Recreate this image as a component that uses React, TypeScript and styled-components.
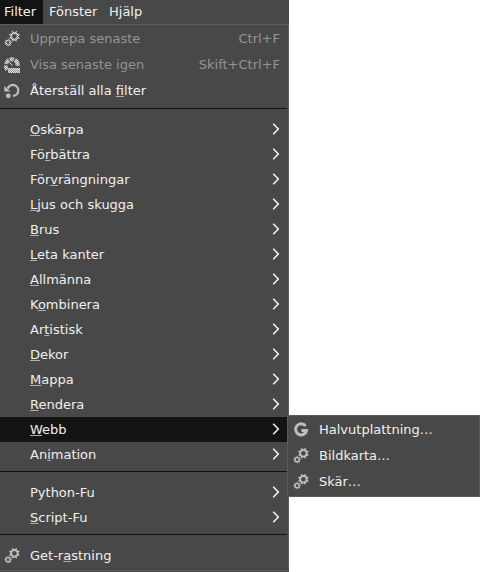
import React from 'react';
import styled, { createGlobalStyle } from 'styled-components';

const GlobalStyle = createGlobalStyle`
  body { margin: 0; background: #fff; overflow: hidden; }
  * { box-sizing: border-box; }
`;

const Screen = styled.div`
  display: flex;
  align-items: flex-start;
  width: 480px;
  height: 572px;
  overflow: hidden;
  font: 13px/16px "DejaVu Sans", sans-serif;
  color: #f0f0f0;
`;

const Column = styled.div`
  width: 289px;
  height: 572px;
  flex: none;
  background: #484848;
`;

const MenuBar = styled.nav`
  display: flex;
  height: 24px;
`;

const BarItem = styled.div<{ $active?: boolean; $width: number; $pad: number }>`
  width: ${p => p.$width}px;
  padding: 4px 0 0 ${p => p.$pad}px;
  white-space: nowrap;
  background: ${p => (p.$active ? '#131313' : 'transparent')};
`;

const Menu = styled.div`
  height: 547px;
  border: 1px solid #5a5a5a;
  border-left: 0;
  padding: 1px 0;
`;

const Submenu = styled.div`
  position: absolute;
  left: 287px;
  top: 415px;
  width: 193px;
  height: 82px;
  border: 1px solid #5a5a5a;
  background: #484848;
  padding: 1px 0;
`;

const Row = styled.div<{ $tall?: boolean; $active?: boolean; $disabled?: boolean; $inset?: number }>`
  display: flex;
  align-items: flex-start;
  height: ${p => (p.$tall ? 26 : 25)}px;
  padding: 5px 8px 0 ${p => p.$inset ?? 4}px;
  color: ${p => (p.$disabled ? '#949494' : '#f0f0f0')};
  background: ${p => (p.$active ? '#131313' : 'transparent')};
`;

const IconSlot = styled.span`
  flex: none;
  width: 26px;
  height: 16px;
  svg { display: block; overflow: visible; }
`;

const Label = styled.span`
  flex: 1;
  white-space: pre;
`;

const Key = styled.span`
  text-decoration: underline 1px #b0b0b0;
  text-underline-offset: 1px;
  text-decoration-skip-ink: none;
`;

const Chevron = styled.svg`
  display: block;
  flex: none;
  width: 8px;
  height: 12px;
  margin-top: 1px;
`;

const Separator = styled.div`
  height: 13px;
  margin-right: 1px;
  padding-top: 4px;
  &::before { content: ''; display: block; height: 1px; background: #131313; }
`;

function gearTeeth(cx: number, cy: number, inner: number, outer: number, turn: number) {
  return Array.from({ length: 8 }, (_, i) => {
    const a = turn + (i * Math.PI) / 4;
    return `M${cx + Math.cos(a) * inner} ${cy + Math.sin(a) * inner}L${cx + Math.cos(a) * outer} ${cy + Math.sin(a) * outer}`;
  }).join('');
}

type IconKind = 'gears' | 'gauge' | 'reset' | 'gegl';

const Icon = ({ kind, dim }: { kind: IconKind; dim?: boolean }) => (
  <svg width="16" height="16" viewBox="0 0 16 16" fill="none" stroke="#bebebe">
    {dim && (
      <defs>
        <pattern id={`check-${kind}`} width="2" height="2" patternUnits="userSpaceOnUse">
          <path d="M0 0h2v2H0z" fill="#777" stroke="none" />
          <path d="M0 0h1v1H0zM1 1h1v1H1z" fill="#fff" stroke="none" />
        </pattern>
        <mask id={`mask-${kind}`} maskUnits="userSpaceOnUse" x="0" y="0" width="16" height="16">
          <path d="M0 0h16v16H0z" fill={`url(#check-${kind})`} stroke="none" />
        </mask>
      </defs>
    )}
    <g mask={dim ? `url(#mask-${kind})` : undefined} stroke={dim ? '#e6e6e6' : '#bebebe'}>
      {kind === 'gears' && (
        <>
          <circle cx="10.4" cy="5.3" r="3.3" strokeWidth="1.9" />
          <path d={gearTeeth(10.4, 5.3, 3.6, 5.4, Math.PI / 8)} strokeWidth="1.6" />
          <circle cx="4.1" cy="11.7" r="2" strokeWidth="1.3" />
          <path d={gearTeeth(4.1, 11.7, 2.1, 3.6, 0)} strokeWidth="1.2" />
        </>
      )}
      {kind === 'gauge' && (
        <>
          <path d="M3 12.8A6 6 0 0 1 1.9 8.4" strokeWidth="3.8" />
          <path d="M2.1 6.9A5.9 5.9 0 0 1 4.9 3.1" strokeWidth="4" />
          <path d="M5.8 2.6A5.9 5.9 0 0 1 9.8 2.5" strokeWidth="4" />
          <path d="M10.8 2.9A5.9 5.9 0 0 1 13.6 8.8" strokeWidth="4" />
          <path d="M8.2 8.8L5.2 4.6" strokeWidth="1" />
          <path d="M4 11h12v5H4z" fill="#e6e6e6" stroke="none" />
        </>
      )}
      {kind === 'reset' && (
        <>
          <path d="M3.8 5.5A5.4 5.4 0 1 1 8.9 12.8" strokeWidth="2.3" />
          <path d="M.3 2.9V8.6H6.5z" fill="#bebebe" stroke="none" />
          <circle cx="4.3" cy="12.8" r="2.4" fill="#bebebe" stroke="none" />
        </>
      )}
      {kind === 'gegl' && (
        <path d="M12.5 4A5.5 5.5 0 1 0 13.5 8.6H8.5" strokeWidth="3" />
      )}
    </g>
  </svg>
);

const Arrow = () => (
  <Chevron viewBox="0 0 8 12">
    <path d="M1.2 .8L6.3 6l-5.1 5.2" fill="none" stroke="#f0f0f0" strokeWidth="1.6" />
  </Chevron>
);

/** Underlines the part of the label enclosed in underscores. */
const Mnemonic = ({ text }: { text: string }) => {
  const [before, key, after] = text.split('_');
  return <Label>{before}{key && <Key>{key}</Key>}{after}</Label>;
};

const groups = [
  ['_O_skärpa', 'Fö_r_bättra', 'För_v_rängningar', '_L_jus och skugga', '_B_rus', '_L_eta kanter',
    '_A_llmänna', 'K_o_mbinera', 'Ar_t_istisk', '_D_ekor', '_M_appa', '_R_endera', '_W_ebb', 'An_i_mation'],
  ['Python-Fu', '_S_cript-Fu'],
];

interface IconRowProps { icon: IconKind; text: string; shortcut?: string; disabled?: boolean; inset?: number }

const IconRow = ({ icon, text, shortcut, disabled, inset }: IconRowProps) => (
  <Row $tall $disabled={disabled} $inset={inset}>
    <IconSlot><Icon kind={icon} dim={disabled} /></IconSlot>
    <Mnemonic text={text} />
    {shortcut && <span>{shortcut}</span>}
  </Row>
);

export default function App() {
  return (
    <Screen>
      <GlobalStyle />
      <Column>
        <MenuBar>
          <BarItem $active $width={43} $pad={4}>Filter</BarItem>
          <BarItem $width={60} $pad={6}>Fönster</BarItem>
          <BarItem $width={50} $pad={6}>Hjälp</BarItem>
        </MenuBar>
        <Menu>
          <IconRow icon="gears" text="Upprepa senaste" shortcut="Ctrl+F" disabled />
          <IconRow icon="gauge" text="Visa senaste igen" shortcut="Skift+Ctrl+F" disabled />
          <IconRow icon="reset" text="Återställ alla _fi_lter" />
          {groups.map((items, g) => (
            <React.Fragment key={g}>
              <Separator />
              {items.map(text => (
                <Row key={text} $inset={30} $active={text === '_W_ebb'}>
                  <Mnemonic text={text} />
                  <Arrow />
                </Row>
              ))}
            </React.Fragment>
          ))}
          <Separator />
          <IconRow icon="gears" text="Get-r_a_stning" />
        </Menu>
      </Column>
      <Submenu>
        <IconRow icon="gegl" text="Halvutplattning…" inset={5} />
        <IconRow icon="gears" text="Bildkarta…" inset={5} />
        <IconRow icon="gears" text="Skär…" inset={5} />
      </Submenu>
    </Screen>
  );
}
